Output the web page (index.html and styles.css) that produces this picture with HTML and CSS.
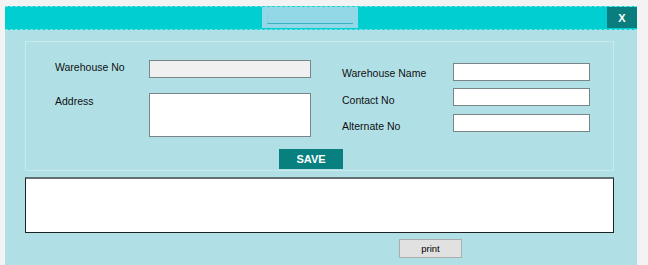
FILE: index.html
```html
<!DOCTYPE html>
<html>
<head>
<meta charset="utf-8">
<link rel="stylesheet" href="styles.css">
</head>
<body>
<div class="window">
  <div class="titlebar">
    <div class="titlefield"><span class="titleline"></span></div>
    <div class="closebtn">X</div>
  </div>
  <div class="content">
    <div class="group">
      <div class="formrow">
        <div class="leftblock">
          <div class="label l1">Warehouse No</div>
          <div class="input readonly"></div>
          <div class="label l2">Address</div>
          <div class="textarea"></div>
        </div>
        <div class="rightblock">
          <div class="label r1">Warehouse Name</div>
          <div class="input"></div>
          <div class="label r2">Contact No</div>
          <div class="input"></div>
          <div class="label r2">Alternate No</div>
          <div class="input"></div>
        </div>
      </div>
      <div class="savebtn">SAVE</div>
    </div>
    <div class="outbox"></div>
    <div class="printbtn">print</div>
  </div>
</div>
</body>
</html>
```
FILE: styles.css
```css
html, body {
  margin: 0;
  padding: 0;
  background: #f3f3f3;
  font-family: "Liberation Sans", Arial, sans-serif;
  overflow: hidden;
}
.window {
  margin: 6px 0 0 5px;
  width: 632px;
  height: 259px;
  background: #b0e0e6;
  display: flex;
  flex-direction: column;
}
.titlebar {
  height: 22px;
  background: #00ced1;
  border-top: 1px dashed #74e2e4;
  border-bottom: 1px dashed #74e2e4;
  display: flex;
  align-items: flex-start;
}
.titlefield {
  margin-left: 257px;
  width: 96px;
  height: 21px;
  background: #92d8e6;
  display: flex;
}
.titleline {
  flex: 1;
  margin: 7px 5px 4px 5px;
  border-left: 1px solid #8ad0dc;
  border-bottom: 1px solid #35b3c2;
}
.closebtn {
  margin-left: auto;
  width: 30px;
  height: 21px;
  background: #0a7e7e;
  color: #fff;
  font-weight: bold;
  font-size: 11px;
  display: flex;
  align-items: center;
  justify-content: center;
}
.content {
  padding: 11px 23px 0 20px;
  display: flex;
  flex-direction: column;
}
.group {
  border: 1px solid #c9e9ec;
  padding: 18px 0 1px 0;
  display: flex;
  flex-direction: column;
}
.formrow {
  display: flex;
  padding-left: 29px;
  align-items: flex-start;
}
.leftblock {
  display: grid;
  grid-template-columns: 94px 162px;
  row-gap: 15px;
  align-items: start;
}
.rightblock {
  margin-left: 31px;
  margin-top: 3px;
  display: grid;
  grid-template-columns: 111px 137px;
  row-gap: 7px;
  align-items: start;
}
.label {
  font-size: 10.5px;
  line-height: 13px;
  color: #111;
}
.l1 { padding-top: 1px; }
.l2 { padding-top: 2px; }
.r1 { padding-top: 4px; }
.r2 { padding-top: 6px; }
.input {
  height: 16px;
  background: #fff;
  border: 1px solid #7a8589;
}
.input.readonly {
  background: #f0f0f0;
}
.textarea {
  height: 42px;
  background: #fff;
  border: 1px solid #7a8589;
}
.savebtn {
  margin: 12px 0 0 253px;
  width: 64px;
  height: 20px;
  background: #088080;
  color: #fff;
  font-weight: bold;
  font-size: 11px;
  display: flex;
  align-items: center;
  justify-content: center;
}
.outbox {
  margin-top: 6px;
  height: 53px;
  background: #fff;
  border: 1px solid #1e2424;
  border-top: 2px solid #617171;
}
.printbtn {
  margin: 6px 0 0 374px;
  width: 61px;
  height: 17px;
  background: #e1e1e1;
  border: 1px solid #adadad;
  font-size: 9.5px;
  color: #000;
  display: flex;
  align-items: center;
  justify-content: center;
}
```
